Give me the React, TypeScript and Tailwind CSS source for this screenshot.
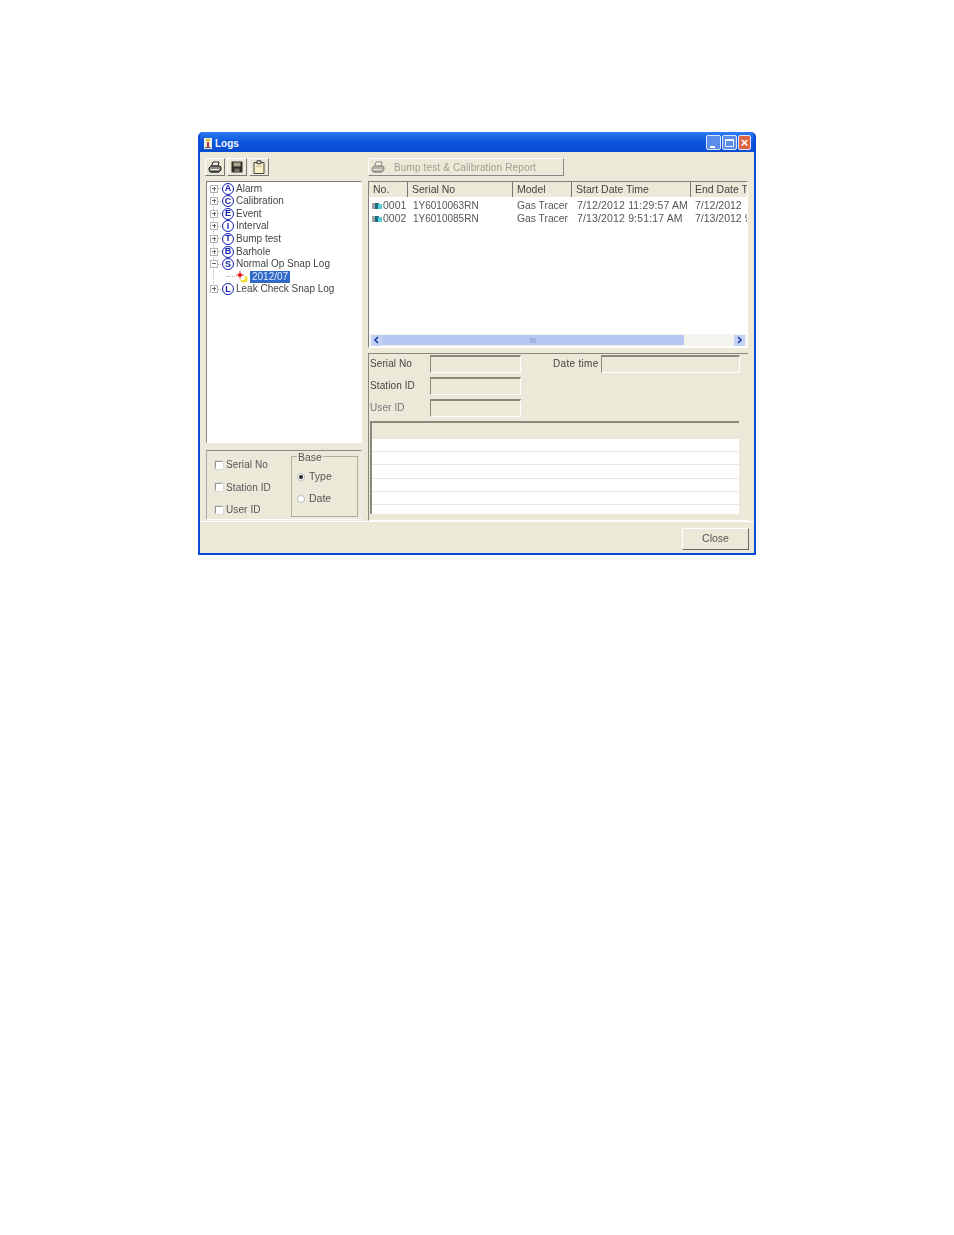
import React from 'react';

const font = { fontFamily: '"Liberation Sans", Arial, sans-serif' };

const treeData = [
  { letter: 'A', label: 'Alarm' },
  { letter: 'C', label: 'Calibration' },
  { letter: 'E', label: 'Event' },
  { letter: 'I', label: 'Interval' },
  { letter: 'T', label: 'Bump test' },
  { letter: 'B', label: 'Barhole' },
  { letter: 'S', label: 'Normal Op Snap Log', open: true },
  { letter: 'L', label: 'Leak Check Snap Log' },
];

const logRows = [
  ['0001', '1Y6010063RN', 'Gas Tracer', '7/12/2012 11:29:57 AM', '7/12/2012'],
  ['0002', '1Y6010085RN', 'Gas Tracer', '7/13/2012 9:51:17 AM', '7/13/2012 9'],
];

const columns = [
  { label: 'No.', width: 'w-[39px]' },
  { label: 'Serial No', width: 'w-[105px]' },
  { label: 'Model', width: 'w-[59px]' },
  { label: 'Start Date Time', width: 'w-[119px]' },
  { label: 'End Date T', width: 'flex-1' },
];

const PrinterIcon = ({ muted }: { muted?: boolean }) => {
  const line = muted ? '#8a8a80' : '#222';
  return (
    <svg width="14" height="13" viewBox="0 0 14 13">
      <path d="M5 1h6L10 5H3.5z" fill="#f2f2ea" stroke={line} />
      <path d="M3 5h9l1 1v3l-2 2H2L1 9V7z" fill={muted ? '#b4b2a6' : '#8a8a84'} stroke={line} />
      <path d="M2.5 8.5h8" stroke={muted ? '#e8e6da' : '#eee'} />
      <path d="M3 11h8" stroke={line} />
    </svg>
  );
};

const SaveIcon = () => (
  <svg width="12" height="12" viewBox="0 0 12 12">
    <path d="M0.5 0.5h11v11h-11z" fill="#2f2f28" />
    <path d="M2.5 1.5h7v4h-7z" fill="#a8a68c" />
    <path d="M3.5 7.5h5v4h-5z" fill="#77756a" />
  </svg>
);

const ClipboardIcon = () => (
  <svg width="12" height="14" viewBox="0 0 12 14">
    <path d="M1 2.5h10v11H1z" fill="#f6f0c4" stroke="#444" />
    <path d="M4 0.8h4v3H4z" fill="#e0e0d8" stroke="#333" />
    <path d="M3 6.5h6" stroke="#c8c090" />
  </svg>
);

const Chevron = ({ right }: { right?: boolean }) => (
  <svg width="7" height="8" viewBox="0 0 7 8">
    <path d={right ? 'M2 1l3 3-3 3' : 'M5 1L2 4l3 3'} fill="none" stroke="#1c3a9a" strokeWidth="1.6" />
  </svg>
);

const ToolButton = ({ children }: { children: React.ReactNode }) => (
  <div className="w-5 h-[18px] flex items-center justify-center border border-t-white border-l-white border-r-[#777] border-b-[#777] bg-[#ece9d8]">
    {children}
  </div>
);

const Expander = ({ open }: { open?: boolean }) => (
  <div className="w-2 h-2 border border-[#b4b4b4] bg-white relative shrink-0">
    <div className="absolute left-[1px] top-[2px] w-[4px] h-px bg-[#666]" />
    {!open && <div className="absolute left-[2.5px] top-[1px] w-px h-[4px] bg-[#666]" />}
  </div>
);

const LetterBadge = ({ letter }: { letter: string }) => (
  <div className="w-3 h-3 rounded-full border-[1.5px] border-[#1420b0] bg-white text-[#1420b0] text-[9px] font-bold leading-none flex items-center justify-center shrink-0">
    {letter}
  </div>
);

const SnapIcon = () => (
  <svg width="13" height="12" viewBox="0 0 13 12" className="shrink-0">
    <circle cx="9" cy="8" r="3.6" fill="#f2dc2e" />
    <circle cx="7.6" cy="6.6" r="2.6" fill="#fff" />
    <circle cx="5" cy="4" r="2.1" fill="#e01818" />
    <path d="M5 0v8M1 4h8" stroke="#e01818" strokeWidth="0.8" />
  </svg>
);

const RowIcon = () => (
  <svg width="10" height="6" viewBox="0 0 10 6" className="shrink-0">
    <path d="M0 1h4M0 3h4M0 5h4" stroke="#444" />
    <path d="M3 0h4v6H3z" fill="#1e6a86" />
    <path d="M6 1h4v5H6z" fill="#58d0d8" />
  </svg>
);

const TreePanel = () => (
  <div className="relative h-[262px] border border-t-[#808080] border-l-[#808080] border-r-white border-b-white bg-white pt-[0.3px]">
    <div className="absolute left-[6px] top-[7px] h-[101px] border-l border-dotted border-[#bbb]" />
    {treeData.map((item) => (
      <React.Fragment key={item.label}>
        <div className="relative h-[12.6px] flex items-center pl-[3px]">
          <Expander open={item.open} />
          <div className="w-[3px] border-t border-dotted border-[#aaa]" />
          <div className="ml-px"><LetterBadge letter={item.letter} /></div>
          <span className="ml-[2px] text-[10px] leading-none text-[#444] whitespace-nowrap">{item.label}</span>
        </div>
        {item.open && (
          <div className="h-[12.6px] flex items-center pl-[20px]">
            <div className="w-2 border-t border-dotted border-[#aaa]" />
            <SnapIcon />
            <span className="ml-[2px] px-[2px] bg-[#3169c6] text-[#dfe8ff] text-[10px] leading-[12px]">2012/07</span>
          </div>
        )}
      </React.Fragment>
    ))}
  </div>
);

const Check = ({ label }: { label: string }) => (
  <div className="flex items-center h-[13px] gap-[3px]">
    <div className="w-2 h-2 border border-t-[#999] border-l-[#999] border-r-white border-b-white bg-white shadow-[0_0_0_0.5px_#ccc]" />
    <span className="text-[10px] tracking-[0.1px] text-[#555] whitespace-nowrap">{label}</span>
  </div>
);

const Radio = ({ label, on }: { label: string; on?: boolean }) => (
  <div className="flex items-center gap-[4px] h-[13px]">
    <div className="w-2 h-2 rounded-full border border-[#bbb] bg-white flex items-center justify-center">
      {on && <div className="w-[4px] h-[4px] rounded-full bg-[#222]" />}
    </div>
    <span className="text-[10.5px] text-[#555]">{label}</span>
  </div>
);

const OptionsPanel = () => (
  <div className="mt-[7px] h-[70px] border border-t-[#888] border-l-[#aaa] border-r-[#eee] border-b-white flex">
    <div className="w-[84px] pl-[8px] pt-[7px] flex flex-col gap-[9.5px]">
      <Check label="Serial No" />
      <Check label="Station ID" />
      <Check label="User ID" />
    </div>
    <div className="relative mt-[5px] w-[67px] h-[61px] border border-[#b0ae9f]">
      <span className="absolute -top-[6px] left-[5px] px-px bg-[#ece9d8] text-[10.5px] leading-[12px] text-[#555]">Base</span>
      <div className="pl-[5px] pt-[13px] flex flex-col gap-[9px]">
        <Radio label="Type" on />
        <Radio label="Date" />
      </div>
    </div>
  </div>
);

const LogTable = () => (
  <div className="h-[167px] border border-t-[#808080] border-l-[#808080] border-r-white border-b-white bg-white flex flex-col">
    <div className="h-[15px] flex bg-[#ece9d8] overflow-hidden">
      {columns.map((col) => (
        <div key={col.label} className={`${col.width} shrink-0 pl-[4px] border-r border-[#777] text-[10.5px] leading-[15px] text-[#444] whitespace-nowrap`}>
          {col.label}
        </div>
      ))}
    </div>
    <div className="flex-1 pt-[2px]">
      {logRows.map((row) => (
        <div key={row[0]} className="h-[13px] flex text-[10.5px] leading-[13px] text-[#555] whitespace-nowrap">
          <div className="w-[39px] shrink-0 pl-[3px] flex items-center gap-px"><RowIcon /><span>{row[0]}</span></div>
          <div className="w-[105px] shrink-0 pl-[5px] text-[10px]">{row[1]}</div>
          <div className="w-[59px] shrink-0 pl-[4px] text-[10.3px]">{row[2]}</div>
          <div className="w-[119px] shrink-0 pl-[5px] tracking-[0.15px]">{row[3]}</div>
          <div className="flex-1 pl-[4px] min-w-0 overflow-hidden">{row[4]}</div>
        </div>
      ))}
    </div>
    <div className="h-[12px] mb-[1px] flex items-center bg-[#f4f3ee]">
      <div className="w-[11px] h-[11px] ml-[2px] bg-[#c3d3f5] flex items-center justify-center"><Chevron /></div>
      <div className="w-[302px] h-[10px] bg-[#b5c9f3] flex items-center justify-center text-[7px] leading-none text-[#7b8fc4]">III</div>
      <div className="flex-1" />
      <div className="w-[11px] h-[11px] mr-[2px] bg-[#c3d3f5] flex items-center justify-center"><Chevron right /></div>
    </div>
  </div>
);

const ReadOnlyField = ({ className }: { className: string }) => (
  <div className={`${className} h-[18px] border border-t-2 border-t-[#8a8878] border-l-[#8a8878] border-r-white border-b-white`} />
);

const DetailRow = ({ label, muted }: { label: string; muted?: boolean }) => (
  <div className="h-[22px] flex items-center">
    <span className={`w-[61px] pl-px text-[10px] tracking-[0.1px] whitespace-nowrap -translate-y-px ${muted ? 'text-[#777]' : 'text-[#444]'}`}>{label}</span>
    <ReadOnlyField className="w-[91px]" />
  </div>
);

const DetailPanel = () => (
  <div className="mt-[5px] h-[168px] border-l border-t border-t-[#8a8878] border-l-[#8a8878] border-b border-b-white flex flex-col">
    <div className="flex items-start -mt-px">
      <div className="w-[153px]">
        <DetailRow label="Serial No" />
        <DetailRow label="Station ID" />
        <DetailRow label="User ID" muted />
      </div>
      <div className="h-[22px] flex items-center">
        <span className="ml-[31px] w-[48px] text-[10px] tracking-[0.3px] text-[#444] whitespace-nowrap -translate-y-px">Date time</span>
        <ReadOnlyField className="w-[139px]" />
      </div>
    </div>
    <div className="mt-[2px] ml-[1px] w-[369px] h-[93px] border-t-2 border-l-2 border-[#8a8878] bg-white flex flex-col overflow-hidden">
      <div className="h-[15.5px] shrink-0 bg-[#ece9d8]" />
      {[0, 1, 2, 3, 4].map((i) => (
        <div key={i} className="h-[13.4px] shrink-0 border-b border-[#e8e8e0]" />
      ))}
    </div>
  </div>
);

const TitleButton = ({ children, red }: { children: React.ReactNode; red?: boolean }) => (
  <div className={`h-[15px] rounded-[2px] border border-[#dfe8fb] flex items-center justify-center ${red ? 'w-[13px] bg-[#dc6340]' : 'w-[15px] bg-[#5a8ce8]'}`}>
    {children}
  </div>
);

export default function App() {
  return (
    <div className="min-h-[1235px] bg-white pt-[132px] pl-[198px]" style={font}>
      <div className="w-[558px] h-[423px] rounded-t-[5px] bg-[#0a3fd6] border-2 border-t-0 border-[#0a49d8] flex flex-col overflow-hidden">
        <div className="h-[20px] -mx-[2px] shrink-0 flex items-center pl-[6px] pr-[5px] bg-gradient-to-b from-[#2d7cf0] via-[#0a55dd] to-[#0a4bd0]">
          <svg width="8" height="11" viewBox="0 0 8 11" className="mt-[2px]">
            <path d="M0 0h8v11H0z" fill="#f0eedc" />
            <path d="M2 1h4v2H2z" fill="#d8b830" />
            <path d="M3 4h2v5H3z" fill="#c23030" />
            <path d="M1 9h6v1H1z" fill="#556" />
          </svg>
          <span className="ml-[3px] mt-[2px] text-[10px] font-bold text-[#eef3ff]">Logs</span>
          <div className="ml-auto flex gap-px mt-px">
            <TitleButton><div className="w-[5px] h-[2px] bg-white mt-[8px] mr-[3px]" /></TitleButton>
            <TitleButton><div className="w-[9px] h-[8px] border border-t-2 border-[#e8efff]" /></TitleButton>
            <TitleButton red><span className="text-white text-[13px] font-bold leading-none">×</span></TitleButton>
          </div>
        </div>
        <div className="flex-1 bg-[#ece9d8] flex flex-col blur-[0.3px]">
          <div className="flex pl-[6px] pt-[4px] flex-1 min-h-0">
            <div className="w-[156px]">
              <div className="h-[25px] pt-[2px] flex gap-[2px] -ml-px">
                <ToolButton><PrinterIcon /></ToolButton>
                <ToolButton><SaveIcon /></ToolButton>
                <ToolButton><ClipboardIcon /></ToolButton>
              </div>
              <TreePanel />
              <OptionsPanel />
            </div>
            <div className="ml-[6px] w-[380px]">
              <div className="h-[25px] pt-[2px]">
                <div className="w-[196px] h-[18px] flex items-center border border-t-white border-l-white border-r-[#888] border-b-[#888]">
                  <div className="ml-[2px] flex"><PrinterIcon muted /></div>
                  <span className="ml-[9px] text-[10px] tracking-[0.14px] text-[#a09e90] whitespace-nowrap">Bump test &amp; Calibration Report</span>
                </div>
              </div>
              <LogTable />
              <DetailPanel />
            </div>
          </div>
          <div className="h-[33px] border-t border-t-white flex justify-end items-start pt-[6px] pr-[5px]">
            <div className="w-[67px] h-[22px] border border-t-white border-l-white border-r-[#666] border-b-[#666] flex items-center justify-center text-[10.5px] text-[#555]">
              Close
            </div>
          </div>
        </div>
      </div>
    </div>
  );
}
